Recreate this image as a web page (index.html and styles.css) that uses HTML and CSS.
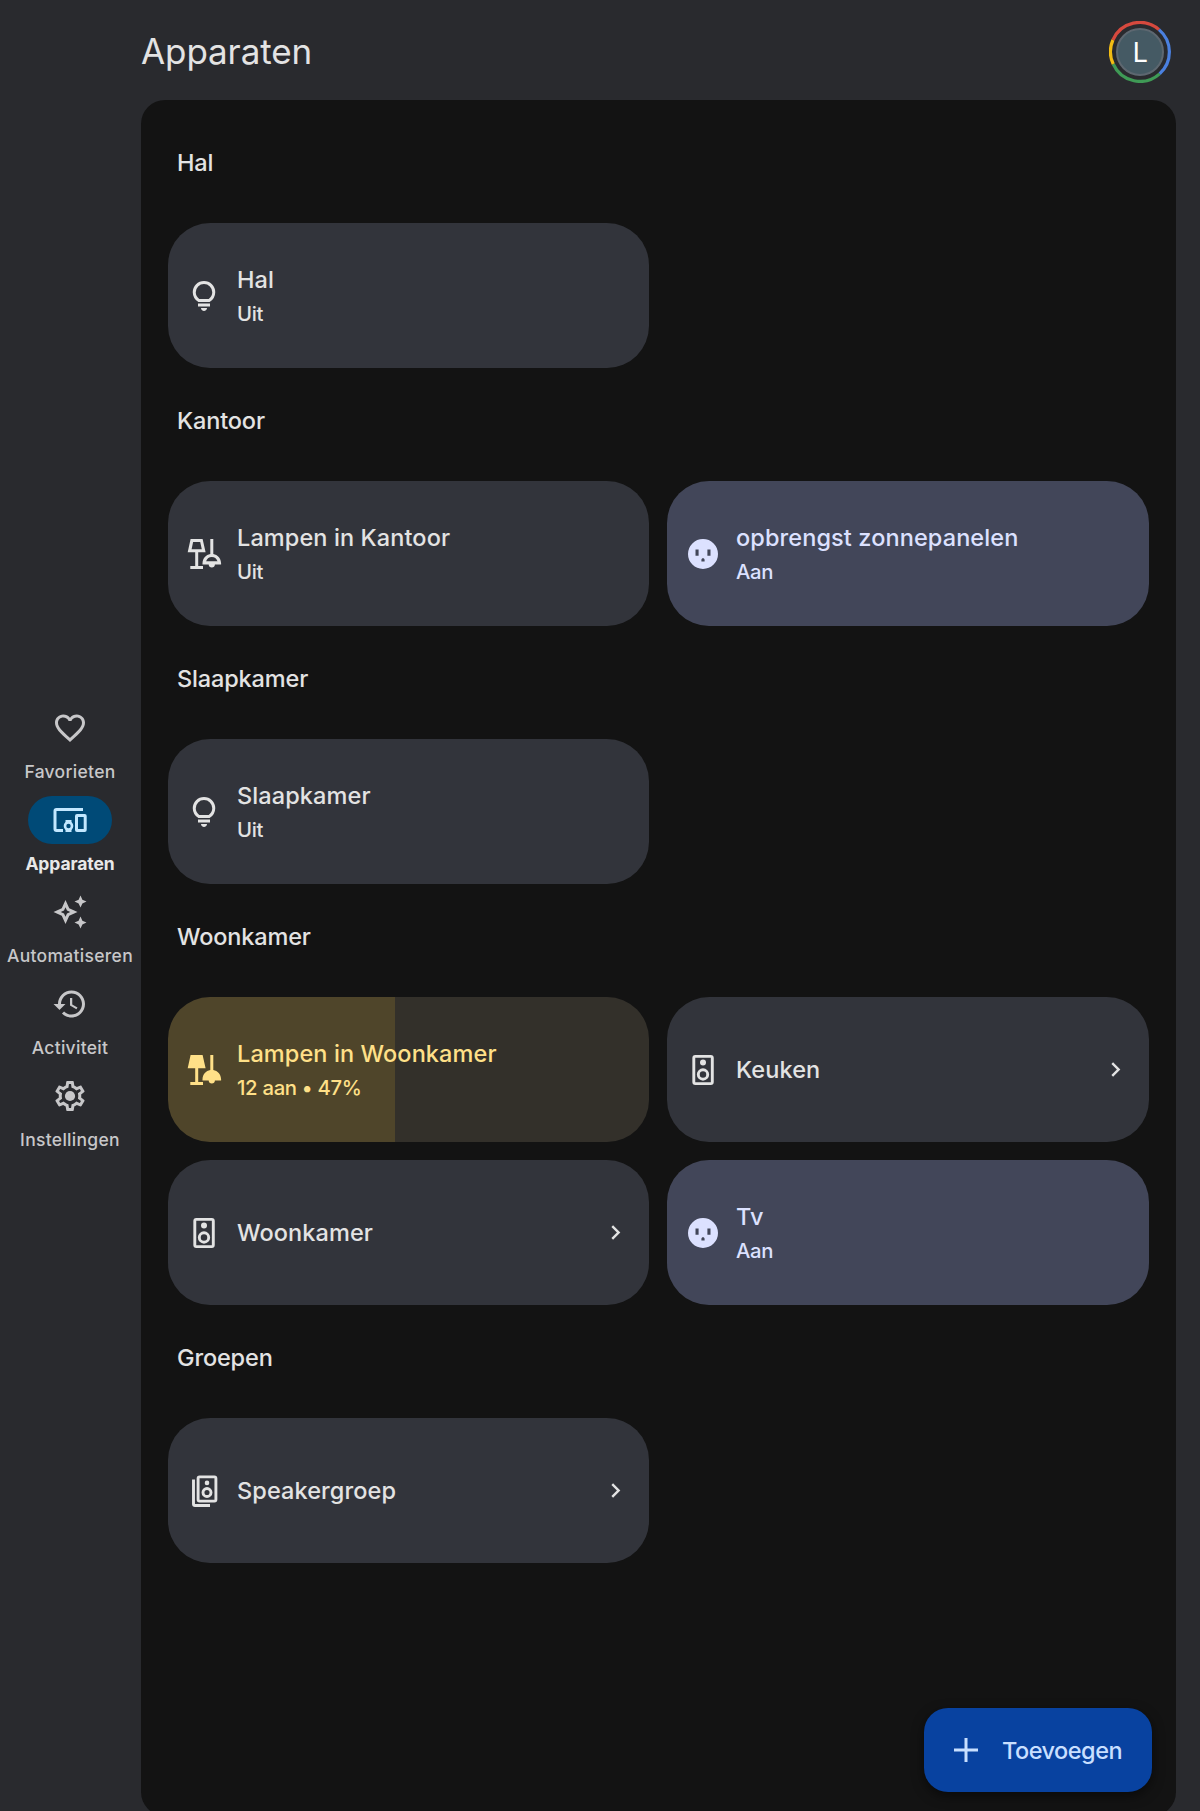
FILE: index.html
```
<!DOCTYPE html>
<html lang="nl">
<head>
  <meta charset="UTF-8">
  <meta name="viewport" content="width=device-width, initial-scale=1.0">
  <title>Apparaten</title>
  <link rel="stylesheet" href="styles.css">
</head>
<body>
  <!-- gedeelde iconen -->
  <svg class="sprite">
    <symbol id="bulb" viewBox="0 -960 960 960">
      <path d="M480-80q-33 0-56.5-23.5T400-160h160q0 33-23.5 56.5T480-80ZM320-200v-80h320v80H320Zm10-120q-69-41-109.5-110T180-580q0-125 87.5-212.5T480-880q125 0 212.5 87.5T780-580q0 81-40.5 150T630-320H330Zm24-80h252q45-32 69.5-79T700-580q0-92-64-156t-156-64q-92 0-156 64t-64 156q0 54 24.5 101t69.5 79Z"/>
    </symbol>
    <symbol id="lamps" viewBox="0 0 36 36">
      <path fill-rule="evenodd" d="M4.600 3h12l3 13.300h-7.400V30h4.800v3H4.300v-3h4.900V16.300H1.700zM7.100 6l-1.500 7.300h10.200L14.200 6z"/>
      <path fill-rule="evenodd" d="M24.300 3h3v15c4.300.7 7.600 4.300 7.800 9.200v1.200h-6.200c0 1.700-1.300 3-3.100 3s-3.100-1.300-3.100-3h-6.200v-1.200c.2-4.900 3.500-8.500 7.800-9.200zM25.800 21c-2.700 0-4.800 1.600-5.700 4.200h11.400c-.9-2.600-3-4.200-5.700-4.200z"/>
    </symbol>
    <symbol id="lamps-on" viewBox="0 0 36 36">
      <path d="M4.600 3h12l3 13.300h-7.400V30h4.800v3H4.300v-3h4.900V16.300H1.700z"/>
      <path d="M24.300 3h3v15c4.300.7 7.600 4.300 7.800 9.200v1.200h-6.200c0 1.700-1.300 3-3.100 3s-3.100-1.300-3.100-3h-6.200v-1.200c.2-4.900 3.500-8.500 7.800-9.200z"/>
    </symbol>
    <symbol id="outlet" viewBox="0 0 36 36">
      <path fill-rule="evenodd" d="M18 3a15 15 0 1 1 0 30a15 15 0 1 1 0-30zM10.500 13.400v6.300h3.100v-6.300zM22.400 13.400v6.300h3.100v-6.300zM18 22.300c-.9 0-1.600.7-1.600 1.600v1.700h3.200v-1.700c0-.9-.7-1.600-1.600-1.600z"/>
    </symbol>
    <symbol id="speaker" viewBox="0 0 36 36">
      <rect x="8.800" y="4.400" width="18.500" height="27.200" rx="1.500" fill="none" stroke="currentColor" stroke-width="2.900"/>
      <circle cx="18" cy="10.500" r="3"/>
      <circle cx="18" cy="22.500" r="4.700" fill="none" stroke="currentColor" stroke-width="2.900"/>
    </symbol>
    <symbol id="speakers" viewBox="0 0 36 36">
      <rect x="12.100" y="3.900" width="17.800" height="24.200" rx="1.500" fill="none" stroke="currentColor" stroke-width="2.900"/>
      <circle cx="21" cy="9.900" r="2.300"/>
      <circle cx="21" cy="19.500" r="4" fill="none" stroke="currentColor" stroke-width="2.900"/>
      <path d="M7.500 6.500V31q0 1.500 1.500 1.500h15" fill="none" stroke="currentColor" stroke-width="2.900"/>
    </symbol>
    <symbol id="chevron" viewBox="0 0 24 24">
      <path d="M10 6L8.590 7.410 13.170 12l-4.580 4.590L10 18l6-6z"/>
    </symbol>
  </svg>

  <nav class="rail">
    <a class="nav-item">
      <span class="nav-icon">
        <svg viewBox="0 0 24 24"><path d="M16.500 3c-1.740 0-3.410.81-4.500 2.090C10.910 3.810 9.240 3 7.500 3 4.420 3 2 5.420 2 8.500c0 3.780 3.400 6.860 8.550 11.540L12 21.350l1.450-1.320C18.600 15.360 22 12.280 22 8.500 22 5.420 19.580 3 16.500 3zm-4.400 15.550l-.1.1-.1-.1C7.140 14.240 4 11.390 4 8.500 4 6.500 5.500 5 7.500 5c1.540 0 3.040.99 3.570 2.360h1.870C13.460 5.990 14.960 5 16.500 5c2 0 3.500 1.500 3.500 3.500 0 2.890-3.140 5.740-7.900 10.050z"/></svg>
      </span>
      <span class="nav-label">Favorieten</span>
    </a>
    <a class="nav-item active">
      <span class="nav-icon">
        <svg viewBox="0 0 36 36">
          <path d="M11 28.500H4.500q-1.500 0-1.500-1.500V9q0-1.500 1.500-1.500H31" fill="none" stroke="currentColor" stroke-width="3"/>
          <rect x="24.500" y="13.500" width="8.700" height="15" rx=".5" fill="none" stroke="currentColor" stroke-width="3"/>
          <circle cx="16.500" cy="24" r="3.500" fill="none" stroke="currentColor" stroke-width="2.600"/>
          <path d="M13.500 18h6v3h-6zM13.500 27h6v3h-6z"/>
        </svg>
      </span>
      <span class="nav-label">Apparaten</span>
    </a>
    <a class="nav-item">
      <span class="nav-icon">
        <svg viewBox="0 0 24 24"><path d="M19 9l1.250-2.750L23 5l-2.750-1.250L19 1l-1.250 2.750L15 5l2.750 1.250L19 9zm0 6l-1.250 2.750L15 19l2.750 1.250L19 23l1.250-2.750L23 19l-2.750-1.250L19 15zm-7.500-5.500L9 4 6.500 9.500 1 12l5.500 2.500L9 20l2.500-5.500L17 12l-5.500-2.500zm-1.510 3.490L9 15.170l-.99-2.180L5.830 12l2.180-.99L9 8.830l.99 2.180 2.180.99-2.180.99z"/></svg>
      </span>
      <span class="nav-label">Automatiseren</span>
    </a>
    <a class="nav-item">
      <span class="nav-icon">
        <svg viewBox="0 0 24 24"><path d="M13 3c-4.970 0-9 4.030-9 9H1l3.890 3.890.07.14L9 12H6c0-3.870 3.130-7 7-7s7 3.130 7 7-3.130 7-7 7c-1.930 0-3.680-.79-4.940-2.060l-1.420 1.420C8.270 19.990 10.510 21 13 21c4.970 0 9-4.030 9-9s-4.030-9-9-9zm-1 5v5l4.280 2.540.72-1.210-3.500-2.080V8H12z"/></svg>
      </span>
      <span class="nav-label">Activiteit</span>
    </a>
    <a class="nav-item">
      <span class="nav-icon">
        <svg viewBox="0 0 24 24">
          <path d="M19.430 12.980c.04-.32.07-.64.07-.98s-.03-.66-.07-.98l2.110-1.650c.19-.15.24-.42.12-.64l-2-3.460c-.09-.16-.26-.25-.44-.25-.06 0-.12.01-.17.03l-2.490 1c-.52-.4-1.080-.73-1.690-.98l-.38-2.650C14.460 2.180 14.250 2 14 2h-4c-.25 0-.46.18-.49.42l-.38 2.650c-.61.25-1.170.59-1.690.98l-2.490-1c-.06-.02-.12-.03-.18-.03-.17 0-.34.09-.43.25l-2 3.460c-.13.22-.07.49.12.64l2.110 1.650c-.04.32-.07.65-.07.98s.03.66.07.98l-2.110 1.650c-.19.15-.24.42-.12.64l2 3.460c.09.16.26.25.44.25.06 0 .12-.01.17-.03l2.490-1c.52.4 1.080.73 1.690.98l.38 2.650c.03.24.24.42.49.42h4c.25 0 .46-.18.49-.42l.38-2.650c.61-.25 1.170-.59 1.690-.98l2.490 1c.06.02.12.03.18.03.17 0 .34-.09.43-.25l2-3.460c.12-.22.07-.49-.12-.64l-2.110-1.650zm-1.980-1.710c.04.31.05.52.05.73 0 .21-.02.43-.05.73l-.14 1.130.89.7 1.080.84-.7 1.210-1.270-.51-1.040-.42-.9.68c-.43.32-.84.56-1.250.73l-1.060.43-.16 1.130-.2 1.350h-1.400l-.19-1.350-.16-1.130-1.060-.43c-.43-.18-.83-.41-1.230-.71l-.91-.7-1.060.43-1.270.51-.7-1.210 1.080-.84.89-.7-.14-1.130c-.03-.31-.05-.54-.05-.74s.02-.43.05-.73l.14-1.130-.89-.7-1.080-.84.7-1.210 1.270.51 1.040.42.9-.68c.43-.32.84-.56 1.250-.73l1.060-.43.16-1.130.2-1.350h1.390l.19 1.350.16 1.130 1.060.43c.43.18.83.41 1.230.71l.91.7 1.060-.43 1.270-.51.7 1.210-1.070.85-.89.7.14 1.130z"/>
          <circle cx="12" cy="12" r="3.400"/>
        </svg>
      </span>
      <span class="nav-label">Instellingen</span>
    </a>
  </nav>

  <div class="main">
    <header class="top-bar">
      <h1>Apparaten</h1>
      <div class="avatar">
        <svg viewBox="0 0 62 62" stroke-width="3.200">
          <path stroke="#d6493e" d="M3.900 19A29.400 29.400 0 0 1 50 8.600"/>
          <path stroke="#4a80e0" d="M50 8.600A29.400 29.400 0 0 1 50.600 52.900"/>
          <path stroke="#3f9a56" d="M50.600 52.900A29.400 29.400 0 0 1 4.200 43"/>
          <path stroke="#f2bc13" d="M4.200 43A29.400 29.400 0 0 1 3.900 19"/>
        </svg>
        <span>L</span>
      </div>
    </header>

    <main class="panel">
      <h2>Hal</h2>
      <div class="tiles">
        <div class="tile">
          <svg class="icon"><use href="#bulb"/></svg>
          <div class="text"><div class="name">Hal</div><div class="status">Uit</div></div>
        </div>
      </div>

      <h2>Kantoor</h2>
      <div class="tiles">
        <div class="tile">
          <svg class="icon"><use href="#lamps"/></svg>
          <div class="text"><div class="name">Lampen in Kantoor</div><div class="status">Uit</div></div>
        </div>
        <div class="tile on">
          <svg class="icon"><use href="#outlet"/></svg>
          <div class="text"><div class="name">opbrengst zonnepanelen</div><div class="status">Aan</div></div>
        </div>
      </div>

      <h2>Slaapkamer</h2>
      <div class="tiles">
        <div class="tile">
          <svg class="icon"><use href="#bulb"/></svg>
          <div class="text"><div class="name">Slaapkamer</div><div class="status">Uit</div></div>
        </div>
      </div>

      <h2>Woonkamer</h2>
      <div class="tiles">
        <div class="tile dimmed" style="--level: 47.2%">
          <svg class="icon"><use href="#lamps-on"/></svg>
          <div class="text"><div class="name">Lampen in Woonkamer</div><div class="status">12 aan • 47%</div></div>
        </div>
        <div class="tile">
          <svg class="icon"><use href="#speaker"/></svg>
          <div class="text"><div class="name">Keuken</div></div>
          <svg class="chevron"><use href="#chevron"/></svg>
        </div>
        <div class="tile">
          <svg class="icon"><use href="#speaker"/></svg>
          <div class="text"><div class="name">Woonkamer</div></div>
          <svg class="chevron"><use href="#chevron"/></svg>
        </div>
        <div class="tile on">
          <svg class="icon"><use href="#outlet"/></svg>
          <div class="text"><div class="name">Tv</div><div class="status">Aan</div></div>
        </div>
      </div>

      <h2>Groepen</h2>
      <div class="tiles">
        <div class="tile">
          <svg class="icon"><use href="#speakers"/></svg>
          <div class="text"><div class="name">Speakergroep</div></div>
          <svg class="chevron"><use href="#chevron"/></svg>
        </div>
      </div>

      <button class="fab">
        <svg viewBox="0 0 24 24"><path d="M0 10.500h10.500V0h3v10.500H24v3H13.500V24h-3V13.500H0z"/></svg>
        Toevoegen
      </button>
    </main>
  </div>
</body>
</html>
```
FILE: styles.css
```
* {
  box-sizing: border-box;
  margin: 0;
  padding: 0;
}

body {
  display: flex;
  height: 1811px;
  overflow: hidden;
  background-color: #292a2e;
  color: #e3e3e3;
  font-family: 'Inter', 'Roboto', sans-serif;
}

svg {
  fill: currentColor;
  flex-shrink: 0;
}

.sprite {
  position: absolute;
  width: 0;
  height: 0;
}

/* navigatie links */
.rail {
  width: 140px;
  margin-right: 1px;
  display: flex;
  flex-direction: column;
  align-items: center;
  gap: 12px;
  padding-top: 704px;
  flex-shrink: 0;
}

.nav-item {
  display: flex;
  flex-direction: column;
  align-items: center;
  gap: 8px;
  color: #c7c7c9;
}

.nav-icon {
  width: 84px;
  height: 48px;
  border-radius: 24px;
  display: flex;
  align-items: center;
  justify-content: center;
}

.nav-icon svg {
  width: 36px;
  height: 36px;
}

.nav-label {
  font-size: 17.5px;
  font-weight: 500;
  line-height: 24px;
  letter-spacing: 0.3px;
}

.nav-item.active .nav-icon {
  background-color: #004a77;
  color: #c2e7ff;
}

.nav-item.active .nav-label {
  color: #e8e8e8;
  font-weight: 700;
  letter-spacing: -0.1px;
}

.main {
  flex: 1;
  padding-right: 24px;
}

.top-bar {
  height: 100px;
  display: flex;
  align-items: center;
  justify-content: space-between;
  padding: 3px 5px 0 0;
}

.top-bar h1 {
  padding-bottom: 2px;
  font-size: 35px;
  font-weight: 400;
  letter-spacing: -0.1px;
}

.avatar {
  position: relative;
  width: 62px;
  height: 62px;
  display: flex;
  align-items: center;
  justify-content: center;
}

.avatar svg {
  position: absolute;
  inset: 0;
  fill: none;
}

.avatar span {
  width: 48px;
  height: 48px;
  border: 2px solid #5d6770;
  border-radius: 50%;
  background-color: #455a64;
  color: #fff;
  font-family: 'Roboto', sans-serif;
  font-size: 27px;
  line-height: 46px;
  text-align: center;
}

/* apparaten */
.panel {
  position: relative;
  height: 1716px;
  padding: 10px 27px 0;
  border-radius: 24px;
  background-color: #131313;
}

.panel h2 {
  height: 113px;
  padding: 34px 9px 0;
  font-size: 23.5px;
  font-weight: 500;
  line-height: 38px;
  letter-spacing: -0.15px;
}

.tiles {
  display: grid;
  grid-template-columns: 481px 1fr;
  gap: 18px;
}

.tile {
  height: 145px;
  display: flex;
  align-items: center;
  padding: 0 19px 0 18px;
  border-radius: 42px;
  background-color: #32343b;
}

.tile .icon {
  width: 36px;
  height: 36px;
}

.text {
  flex: 1;
  padding-left: 15px;
}

.name {
  font-size: 23.5px;
  font-weight: 500;
  line-height: 36px;
  letter-spacing: 0.1px;
}

.status {
  font-size: 20.3px;
  font-weight: 500;
  line-height: 30px;
  letter-spacing: -0.3px;
}

.name:not(:last-child) {
  line-height: 34px;
  padding-bottom: 2px;
}

.chevron {
  width: 29px;
  height: 29px;
}

.tile.on {
  background-color: #424659;
  color: #dce1ff;
}

.tile.dimmed {
  background: linear-gradient(to right, #4f452a var(--level), #33302a var(--level));
  color: #ffe088;
}

.fab {
  position: absolute;
  right: 24px;
  top: 1608px;
  width: 228px;
  height: 84px;
  display: flex;
  align-items: center;
  gap: 24px;
  padding-left: 30px;
  border: none;
  border-radius: 24px;
  background-color: #0842a0;
  color: #c8dfff;
  font-family: inherit;
  font-size: 23.5px;
  font-weight: 500;
  letter-spacing: -0.5px;
  box-shadow: 0 4px 12px rgba(0, 0, 0, 0.5);
}

.fab svg {
  width: 24px;
  height: 24px;
}
```
